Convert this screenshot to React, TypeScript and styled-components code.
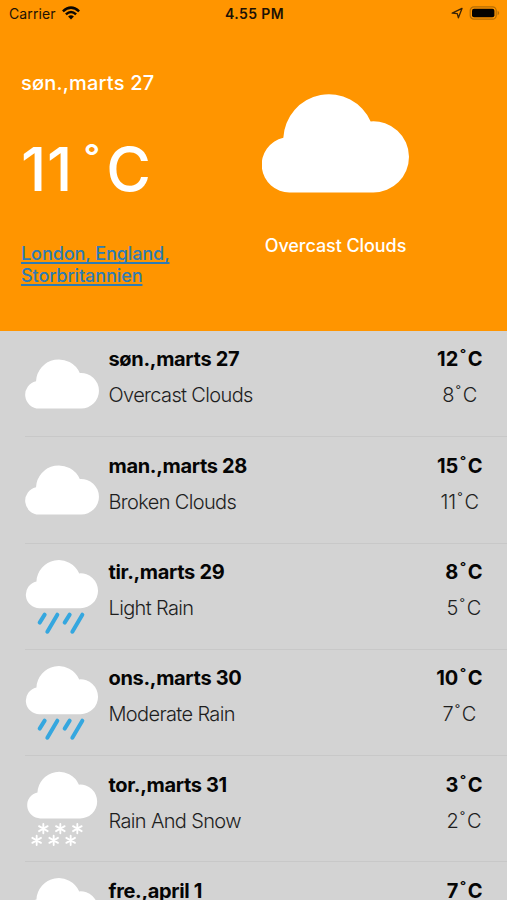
import React from "react";
import styled, { createGlobalStyle } from "styled-components";

const GlobalStyle = createGlobalStyle`
  * { box-sizing: border-box; }
  html, body { margin: 0; background: #d3d3d3; }
  body { font-family: Inter, "Liberation Sans", sans-serif; overflow: hidden; }
`;

const Screen = styled.main`
  width: 507px;
  height: 900px;
  overflow: hidden;
  display: flex;
  flex-direction: column;
  background: #d3d3d3;
`;

const Header = styled.header`
  flex: none;
  height: 331px;
  background: #ff9500;
  color: #fff;
`;

const StatusBar = styled.div`
  display: grid;
  grid-template-columns: 1fr auto 1fr;
  align-items: center;
  height: 26px;
  padding: 0 7px 0 9px;
  color: #1c1205;
  font-size: 14px;
`;

const Carrier = styled.div`
  display: flex;
  align-items: center;
  gap: 6px;
  letter-spacing: 0.1px;
`;

const Clock = styled.div`
  font-weight: 600;
  letter-spacing: 0.4px;
`;

const Indicators = styled.div`
  display: flex;
  align-items: center;
  justify-content: flex-end;
  gap: 6px;
`;

const Current = styled.section`
  display: grid;
  grid-template-columns: 241px 1fr;
  padding: 2px 0 0 21px;
`;

const Summary = styled.div`
  display: flex;
  flex-direction: column;
`;

const Today = styled.div`
  margin-top: 43px;
  font-size: 20px;
  line-height: 24px;
  font-weight: 500;
  letter-spacing: 0.2px;
`;

const Temperature = styled.div`
  margin-top: 37px;
  font-size: 61px;
  line-height: 74px;
  font-weight: 450;
  letter-spacing: 0.8px;
  white-space: nowrap;
`;

const Place = styled.a`
  width: 160px;
  margin-top: 37px;
  font-size: 18px;
  line-height: 22px;
  font-weight: 500;
  letter-spacing: -0.08px;
  color: #2e7cb5;
  text-decoration: underline;
  text-decoration-thickness: 1.5px;
  text-underline-offset: 2px;
  text-decoration-skip-ink: none;
`;

const Condition = styled.div`
  display: flex;
  flex-direction: column;
  align-items: center;
  width: 147px;
  padding-top: 66px;
`;

const ConditionName = styled.div`
  margin-top: 41px;
  font-size: 18px;
  line-height: 24px;
  font-weight: 500;
  letter-spacing: -0.07px;
  white-space: nowrap;
`;

const Forecast = styled.ul`
  margin: 0;
  padding: 0;
  list-style: none;
`;

const Row = styled.li`
  display: flex;
  height: 106.3px;
  margin-left: 25px;
  padding-right: 24.5px;
  box-shadow: inset 0 -1px #c8c8c8;
`;

const Details = styled.div`
  flex: 1;
  padding: 16.45px 0 0 8.5px;
`;

const Temps = styled.div`
  display: flex;
  flex-direction: column;
  align-items: center;
  padding-top: 16.45px;
`;

const Strong = styled.div<{ $spacing?: number }>`
  font-size: 20px;
  line-height: 24px;
  font-weight: 700;
  color: #050505;
  white-space: nowrap;
  letter-spacing: ${(p) => p.$spacing ?? 0}px;
`;

const Light = styled.div<{ $spacing?: number }>`
  margin-top: 12px;
  font-size: 20px;
  line-height: 24px;
  font-weight: 300;
  color: #1e1e1e;
  white-space: nowrap;
  letter-spacing: ${(p) => p.$spacing ?? 0}px;
`;

const Degree = styled.span<{ $before: number; $after: number; $size?: number; $lift?: number }>`
  margin: 0 ${(p) => p.$after}px 0 ${(p) => p.$before}px;
  font-size: ${(p) => p.$size ?? 0.9}em;
  line-height: 0;
  vertical-align: ${(p) => p.$lift ?? 2}px;
`;

const Drawing = styled.svg`
  display: block;
  flex: none;
`;

const CLOUD =
  "M83 295A83 83 0 0 1 64 131A137 137 0 0 1 326 82A107 107 0 0 1 441 188A107 107 0 0 1 334 295Z";

type Weather = "cloud" | "rain" | "snow";

const placement: Record<Weather, string> = {
  cloud: "translate(1 85) scale(.501)",
  rain: "translate(3 48) scale(.49)",
  snow: "translate(7 47) scale(.475)",
};

const flakes = [
  [55, 218], [106, 218], [157, 218],
  [35, 253], [86, 253], [137, 253],
];

function WeatherIcon({ kind }: { kind: Weather }) {
  return (
    <Drawing width="75" height="106" viewBox="0 0 225 318">
      <path d={CLOUD} transform={placement[kind]} fill="#fff" />
      {kind === "rain" && (
        <path
          d="M59 212L44 236M97 212L67 263M134 212L119 236M172 212L142 263"
          stroke="#35a7df"
          strokeWidth="12"
          strokeLinecap="round"
        />
      )}
      {kind === "snow" &&
        flakes.map(([x, y]) => (
          <path
            key={`${x}-${y}`}
            transform={`translate(${x} ${y})`}
            d="M0-14V14M-13-7.5L13 7.5M-13 7.5L13-7.5"
            stroke="#fff"
            strokeWidth="5.5"
            strokeLinecap="round"
          />
        ))}
    </Drawing>
  );
}

const days: { day: string; text: string; high: number; low: number; kind: Weather }[] = [
  { day: "søn.,marts 27", text: "Overcast Clouds", high: 12, low: 8, kind: "cloud" },
  { day: "man.,marts 28", text: "Broken Clouds", high: 15, low: 11, kind: "cloud" },
  { day: "tir.,marts 29", text: "Light Rain", high: 8, low: 5, kind: "rain" },
  { day: "ons.,marts 30", text: "Moderate Rain", high: 10, low: 7, kind: "rain" },
  { day: "tor.,marts 31", text: "Rain And Snow", high: 3, low: 2, kind: "snow" },
  { day: "fre.,april 1", text: "Light Rain", high: 7, low: 4, kind: "rain" },
];

export default function App() {
  return (
    <Screen>
      <GlobalStyle />
      <Header>
        <StatusBar>
          <Carrier>
            Carrier
            <Drawing width="18" height="14" viewBox="0 0 18 14">
              <g fill="none" stroke="#0c0803" strokeWidth="2.5">
                <path d="M.9 5.3Q9-2.1 17.1 5.3" />
                <path d="M3.9 8.4Q9 3.7 14.1 8.4" />
              </g>
              <path d="M6.1 10.6Q9 8.1 11.9 10.6L9 13.6Z" fill="#0c0803" />
            </Drawing>
          </Carrier>
          <Clock>4.55 PM</Clock>
          <Indicators>
            <Drawing width="12" height="12" viewBox="0 0 12 12">
              <path
                d="M1.2 6.2L11 1.4L7.4 10.8L6.3 6.6Z"
                fill="none"
                stroke="#382307"
                strokeWidth="1.3"
                strokeLinejoin="round"
              />
            </Drawing>
            <Drawing width="31" height="14" viewBox="0 0 31 14">
              <rect x="1.2" y=".9" width="26" height="12.2" rx="3.7" fill="none" stroke="#b46d05" strokeWidth="1.2" />
              <rect x="3" y="2.7" width="22.4" height="8.6" rx="2" fill="#050301" />
              <path d="M28.6 4.8Q30.2 5.5 30.2 7T28.6 9.2Z" fill="#b46d05" />
            </Drawing>
          </Indicators>
        </StatusBar>
        <Current>
          <Summary>
            <Today>søn.,marts 27</Today>
            <Temperature>
              11<Degree $before={11} $after={6} $size={0.78} $lift={8}>˚</Degree>C
            </Temperature>
            <Place>London, England, Storbritannien</Place>
          </Summary>
          <Condition>
            <Drawing width="147" height="98.5" viewBox="0 0 441 295">
              <path d={CLOUD} fill="#fff" />
            </Drawing>
            <ConditionName>Overcast Clouds</ConditionName>
          </Condition>
        </Current>
      </Header>
      <Forecast>
        {days.map((d) => (
          <Row key={d.day}>
            <WeatherIcon kind={d.kind} />
            <Details>
              <Strong $spacing={-0.33}>{d.day}</Strong>
              <Light $spacing={-0.64}>{d.text}</Light>
            </Details>
            <Temps>
              <Strong>
                {d.high}<Degree $before={1.5} $after={1.3}>˚</Degree>C
              </Strong>
              <Light>
                {d.low}<Degree $before={1.3} $after={1.9}>˚</Degree>C
              </Light>
            </Temps>
          </Row>
        ))}
      </Forecast>
    </Screen>
  );
}
